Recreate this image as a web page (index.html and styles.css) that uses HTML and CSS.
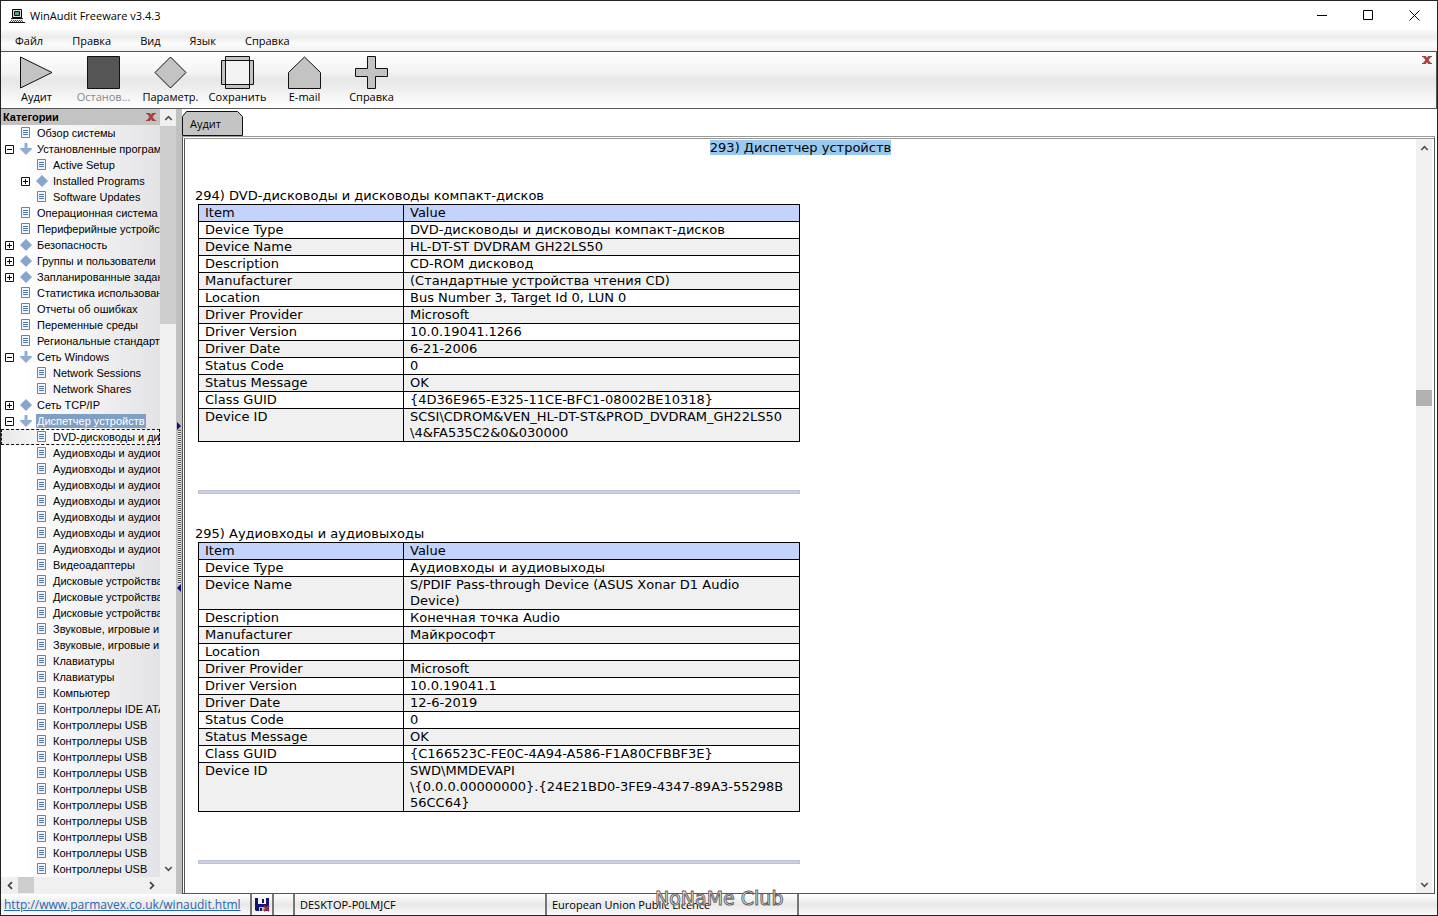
FILE: index.html
```html
<!DOCTYPE html>
<html lang="ru">
<head>
<meta charset="utf-8">
<title>WinAudit Freeware v3.4.3</title>
<link rel="stylesheet" href="styles.css">
</head>
<body>
<svg class="defs" aria-hidden="true">
  <symbol id="page" viewBox="0 0 10 12"><path d="M.5.5h8v10h-8z" fill="#f4f8fc" stroke="#5b87ae"/><path d="M2 3.5h5M2 5.5h5M2 7.5h5" stroke="#47759f"/></symbol>
  <symbol id="closed" viewBox="0 0 12 12"><path d="M6 0l6 6-6 6-6-6z" fill="#86a6ca"/></symbol>
  <symbol id="open" viewBox="0 0 12 12"><path d="M4.500 0h3v5H12v1L6 12 0 6V5h4.500z" fill="#93acd2"/></symbol>
  <symbol id="plus" viewBox="0 0 9 9"><path d="M.5.5h8v8h-8z" fill="#fff" stroke="#111"/><path d="M2 4.5h5M4.500 2v5" stroke="#000"/></symbol>
  <symbol id="minus" viewBox="0 0 9 9"><path d="M.5.5h8v8h-8z" fill="#fff" stroke="#111"/><path d="M2 4.5h5" stroke="#000"/></symbol>
  <symbol id="up" viewBox="0 0 8 6"><path d="M.7 5L4 1.600 7.300 5" fill="none" stroke="#505050" stroke-width="1.700"/></symbol>
  <symbol id="down" viewBox="0 0 8 6"><path d="M.7 1L4 4.400 7.300 1" fill="none" stroke="#505050" stroke-width="1.700"/></symbol>
  <symbol id="left" viewBox="0 0 6 8"><path d="M5 .7L1.600 4 5 7.300" fill="none" stroke="#404040" stroke-width="1.700"/></symbol>
  <symbol id="right" viewBox="0 0 6 8"><path d="M1 .7L4.400 4 1 7.300" fill="none" stroke="#404040" stroke-width="1.700"/></symbol>
  <symbol id="cross" viewBox="0 0 10 8"><path d="M0 0h4l1 2 1-2h4v1H9L6.500 4 9 7h1v1H6L5 6 4 8H0V7h1l2.500-3L1 1H0z" fill="#a8403f"/></symbol>
</svg>
<div class="window">
  <header class="titlebar">
    <svg class="logo" viewBox="0 0 16 14"><path d="M3.500.5h9v8h-9z" fill="#ddd" stroke="#000"/><path d="M5.500 2.500h5v4h-5z" fill="#5c9c84" stroke="#111"/><path d="M2 9.500h12M0 13.500h16" stroke="#111"/><path d="M2 10.500h12v2H2z" fill="#ddd"/><path d="M2 11.500h12M1 12.500h14" stroke="#555" stroke-dasharray="1 1"/></svg>
    <span class="title">WinAudit Freeware v3.4.3</span>
    <button aria-label="Minimize"><svg width="11" height="11"><path d="M0 5.500h10" stroke="#000"/></svg></button>
    <button aria-label="Maximize"><svg width="11" height="11"><path d="M.5.500h9v9h-9z" fill="none" stroke="#000"/></svg></button>
    <button aria-label="Close"><svg width="11" height="11"><path d="M.5.500l10 10M10.500.500l-10 10" stroke="#000"/></svg></button>
  </header>
  <nav class="menu"><button>Файл</button><button>Правка</button><button>Вид</button><button>Язык</button><button>Справка</button></nav>
  <div class="toolbar">
    <button><svg viewBox="0 0 33 33"><path d="M.5 1v31L32 16.500z" fill="#c3c3c3" stroke="#111"/></svg>Аудит</button>
    <button disabled><svg viewBox="0 0 33 33"><path d="M.5.500h32v32h-32z" fill="#555" stroke="#111"/></svg>Останов...</button>
    <button><svg viewBox="0 0 33 33"><path d="M16.500 1L32 16.500 16.500 32 1 16.500z" fill="#c3c3c3" stroke="#111"/></svg>Параметр.</button>
    <button><svg viewBox="0 0 33 33"><path d="M.5 4.500h32v24h-32zM4.500.500h24v32h-24z" fill="#c3c3c3"/><path d="M5 5h23v23H5z" fill="#f3f3f3"/><path d="M.5 4.500h32v24h-32zM4.500.500h24v32h-24z" fill="none" stroke="#111"/></svg>Сохранить</button>
    <button><svg viewBox="0 0 33 33"><path d="M16.500 1L32.500 16.500v16H.5v-16z" fill="#c3c3c3" stroke="#111"/></svg>E-mail</button>
    <button><svg viewBox="0 0 33 33"><path d="M12.500.500h8v12h12v8h-12v12h-8v-12H.5v-8h12z" fill="#c3c3c3" stroke="#111"/></svg>Справка</button>
    <button class="close" aria-label="Close toolbar"><svg><use href="#cross"/></svg></button>
  </div>
  <div class="main">
    <aside class="side">
      <div class="side-top">
        <div class="categories">
          <div class="cat-head"><b>Категории</b><button aria-label="Close categories"><svg><use href="#cross"/></svg></button></div>
          <ul class="tree">
            <li><i></i><svg><use href="#page"/></svg><span>Обзор системы</span></li>
            <li><button aria-label="Collapse"><svg><use href="#minus"/></svg></button><svg><use href="#open"/></svg><span>Установленные программы</span></li>
            <li class="sub"><i></i><svg><use href="#page"/></svg><span>Active Setup</span></li>
            <li class="sub"><button aria-label="Expand"><svg><use href="#plus"/></svg></button><svg><use href="#closed"/></svg><span>Installed Programs</span></li>
            <li class="sub"><i></i><svg><use href="#page"/></svg><span>Software Updates</span></li>
            <li><i></i><svg><use href="#page"/></svg><span>Операционная система</span></li>
            <li><i></i><svg><use href="#page"/></svg><span>Периферийные устройства</span></li>
            <li><button aria-label="Expand"><svg><use href="#plus"/></svg></button><svg><use href="#closed"/></svg><span>Безопасность</span></li>
            <li><button aria-label="Expand"><svg><use href="#plus"/></svg></button><svg><use href="#closed"/></svg><span>Группы и пользователи</span></li>
            <li><button aria-label="Expand"><svg><use href="#plus"/></svg></button><svg><use href="#closed"/></svg><span>Запланированные задания</span></li>
            <li><i></i><svg><use href="#page"/></svg><span>Статистика использования</span></li>
            <li><i></i><svg><use href="#page"/></svg><span>Отчеты об ошибках</span></li>
            <li><i></i><svg><use href="#page"/></svg><span>Переменные среды</span></li>
            <li><i></i><svg><use href="#page"/></svg><span>Региональные стандарты</span></li>
            <li><button aria-label="Collapse"><svg><use href="#minus"/></svg></button><svg><use href="#open"/></svg><span>Сеть Windows</span></li>
            <li class="sub"><i></i><svg><use href="#page"/></svg><span>Network Sessions</span></li>
            <li class="sub"><i></i><svg><use href="#page"/></svg><span>Network Shares</span></li>
            <li><button aria-label="Expand"><svg><use href="#plus"/></svg></button><svg><use href="#closed"/></svg><span>Сеть TCP/IP</span></li>
            <li><button aria-label="Collapse"><svg><use href="#minus"/></svg></button><svg><use href="#open"/></svg><span class="selected">Диспетчер устройств</span></li>
            <li class="sub focus"><i></i><svg><use href="#page"/></svg><span>DVD-дисководы и дисководы</span></li>
            <li class="sub"><i></i><svg><use href="#page"/></svg><span>Аудиовходы и аудиовыходы</span></li>
            <li class="sub"><i></i><svg><use href="#page"/></svg><span>Аудиовходы и аудиовыходы</span></li>
            <li class="sub"><i></i><svg><use href="#page"/></svg><span>Аудиовходы и аудиовыходы</span></li>
            <li class="sub"><i></i><svg><use href="#page"/></svg><span>Аудиовходы и аудиовыходы</span></li>
            <li class="sub"><i></i><svg><use href="#page"/></svg><span>Аудиовходы и аудиовыходы</span></li>
            <li class="sub"><i></i><svg><use href="#page"/></svg><span>Аудиовходы и аудиовыходы</span></li>
            <li class="sub"><i></i><svg><use href="#page"/></svg><span>Аудиовходы и аудиовыходы</span></li>
            <li class="sub"><i></i><svg><use href="#page"/></svg><span>Видеоадаптеры</span></li>
            <li class="sub"><i></i><svg><use href="#page"/></svg><span>Дисковые устройства</span></li>
            <li class="sub"><i></i><svg><use href="#page"/></svg><span>Дисковые устройства</span></li>
            <li class="sub"><i></i><svg><use href="#page"/></svg><span>Дисковые устройства</span></li>
            <li class="sub"><i></i><svg><use href="#page"/></svg><span>Звуковые, игровые и видео</span></li>
            <li class="sub"><i></i><svg><use href="#page"/></svg><span>Звуковые, игровые и видео</span></li>
            <li class="sub"><i></i><svg><use href="#page"/></svg><span>Клавиатуры</span></li>
            <li class="sub"><i></i><svg><use href="#page"/></svg><span>Клавиатуры</span></li>
            <li class="sub"><i></i><svg><use href="#page"/></svg><span>Компьютер</span></li>
            <li class="sub"><i></i><svg><use href="#page"/></svg><span>Контроллеры IDE ATA</span></li>
            <li class="sub"><i></i><svg><use href="#page"/></svg><span>Контроллеры USB</span></li>
            <li class="sub"><i></i><svg><use href="#page"/></svg><span>Контроллеры USB</span></li>
            <li class="sub"><i></i><svg><use href="#page"/></svg><span>Контроллеры USB</span></li>
            <li class="sub"><i></i><svg><use href="#page"/></svg><span>Контроллеры USB</span></li>
            <li class="sub"><i></i><svg><use href="#page"/></svg><span>Контроллеры USB</span></li>
            <li class="sub"><i></i><svg><use href="#page"/></svg><span>Контроллеры USB</span></li>
            <li class="sub"><i></i><svg><use href="#page"/></svg><span>Контроллеры USB</span></li>
            <li class="sub"><i></i><svg><use href="#page"/></svg><span>Контроллеры USB</span></li>
            <li class="sub"><i></i><svg><use href="#page"/></svg><span>Контроллеры USB</span></li>
            <li class="sub"><i></i><svg><use href="#page"/></svg><span>Контроллеры USB</span></li>
          </ul>
        </div>
        <div class="vscroll"><button aria-label="Scroll up"><svg><use href="#up"/></svg></button><div class="track"><div class="thumb tall"></div></div><button aria-label="Scroll down"><svg><use href="#down"/></svg></button></div>
      </div>
      <div class="hscroll"><button aria-label="Scroll left"><svg><use href="#left"/></svg></button><div class="thumb"></div><button aria-label="Scroll right"><svg><use href="#right"/></svg></button></div>
    </aside>
    <div class="splitter"><svg viewBox="0 0 4 8"><path d="M0 0l4 4-4 4z" fill="#10107c"/></svg><div class="dots"></div><svg viewBox="0 0 4 8"><path d="M4 0L0 4l4 4z" fill="#10107c"/></svg></div>
    <section class="content">
      <div class="tabs"><button><svg viewBox="0 0 61 25" aria-hidden="true"><path d="M.5 24.500V5.500l4-5h51l5 5v19z" fill="#c4c4c4" stroke="#111"/></svg><span>Аудит</span></button></div>
      <div class="frame">
        <article class="report">
          <h1><mark>293) Диспетчер устройств</mark></h1>
          <h2>294) DVD-дисководы и дисководы компакт-дисков</h2>
          <table>
            <tr><th>Item</th><th>Value</th></tr>
            <tr><td>Device Type</td><td>DVD-дисководы и дисководы компакт-дисков</td></tr>
            <tr><td>Device Name</td><td>HL-DT-ST DVDRAM GH22LS50</td></tr>
            <tr><td>Description</td><td>CD-ROM дисковод</td></tr>
            <tr><td>Manufacturer</td><td>(Стандартные устройства чтения CD)</td></tr>
            <tr><td>Location</td><td>Bus Number 3, Target Id 0, LUN 0</td></tr>
            <tr><td>Driver Provider</td><td>Microsoft</td></tr>
            <tr><td>Driver Version</td><td>10.0.19041.1266</td></tr>
            <tr><td>Driver Date</td><td>6-21-2006</td></tr>
            <tr><td>Status Code</td><td>0</td></tr>
            <tr><td>Status Message</td><td>OK</td></tr>
            <tr><td>Class GUID</td><td>{4D36E965-E325-11CE-BFC1-08002BE10318}</td></tr>
            <tr><td>Device ID</td><td>SCSI\CDROM&amp;VEN_HL-DT-ST&amp;PROD_DVDRAM_GH22LS50<br>\4&amp;FA535C2&amp;0&amp;030000</td></tr>
          </table>
          <hr>
          <h2>295) Аудиовходы и аудиовыходы</h2>
          <table>
            <tr><th>Item</th><th>Value</th></tr>
            <tr><td>Device Type</td><td>Аудиовходы и аудиовыходы</td></tr>
            <tr><td>Device Name</td><td>S/PDIF Pass-through Device (ASUS Xonar D1 Audio<br>Device)</td></tr>
            <tr><td>Description</td><td>Конечная точка Audio</td></tr>
            <tr><td>Manufacturer</td><td>Майкрософт</td></tr>
            <tr><td>Location</td><td></td></tr>
            <tr><td>Driver Provider</td><td>Microsoft</td></tr>
            <tr><td>Driver Version</td><td>10.0.19041.1</td></tr>
            <tr><td>Driver Date</td><td>12-6-2019</td></tr>
            <tr><td>Status Code</td><td>0</td></tr>
            <tr><td>Status Message</td><td>OK</td></tr>
            <tr><td>Class GUID</td><td>{C166523C-FE0C-4A94-A586-F1A80CFBBF3E}</td></tr>
            <tr><td>Device ID</td><td>SWD\MMDEVAPI<br>\{0.0.0.00000000}.{24E21BD0-3FE9-4347-89A3-55298B<br>56CC64}</td></tr>
          </table>
          <hr>
        </article>
        <div class="vscroll"><button aria-label="Scroll up"><svg><use href="#up"/></svg></button><div class="track low"><div class="thumb"></div></div><button aria-label="Scroll down"><svg><use href="#down"/></svg></button></div>
      </div>
    </section>
  </div>
  <footer class="status">
    <div class="c-link"><a href="http://www.parmavex.co.uk/winaudit.html">http://www.parmavex.co.uk/winaudit.html</a></div>
    <div class="c-icon"><svg viewBox="0 0 15 14"><path d="M0 0h14v13H1l-1-1z" fill="#14146f"/><path d="M3 0h8v6H3z" fill="#f4f4f4"/><path d="M7 1h2v4H7z" fill="#14146f"/><path d="M4 9h6v4H4z" fill="#bbb"/><path d="M5 10h2v3H5z" fill="#14146f"/><path d="M9 8l5 5M14 8l-5 5" stroke="#b32638" stroke-width="2"/></svg></div>
    <div class="c-gap"></div>
    <div class="c-text">DESKTOP-P0LMJCF</div>
    <div class="c-text">European Union Public Licence</div>
  </footer>
  <div class="watermark">NoNaMe Club</div>
</div>
</body>
</html>
```
FILE: styles.css
```css
* { box-sizing: border-box; }
body { margin: 0; font: 11px/16px "Open Sans", "Noto Sans", sans-serif; color: #000; }
button { margin: 0; padding: 0; border: 0; background: none; font: inherit; color: inherit; }
svg { display: block; flex: none; }
.defs { position: absolute; width: 0; height: 0; }
.window { position: relative; display: flex; flex-direction: column; height: 100vh; overflow: hidden; border: 1px solid #222; background: #fff; }

.titlebar { display: flex; align-items: center; height: 29px; padding-left: 8px; }
.titlebar .logo { width: 16px; height: 14px; }
.titlebar .title { flex: 1; padding-left: 5px; }
.titlebar button { display: flex; align-items: center; justify-content: center; width: 46px; height: 29px; }

.menu { display: flex; gap: 29px; height: 21px; padding-left: 14px; background: linear-gradient(#f8f8f8, #ececec 35%, #fcfcfc 65%, #f2f2f2); }
.menu button { line-height: 21px; }

.toolbar { display: flex; height: 58px; padding-left: 2px; border: 1px solid #555; border-width: 1px 1px 1px 0; background: linear-gradient(#fff, #f4f4f4 35%, #e6e6e6 50%, #f0f0f0 70%, #fff); }
.toolbar button { display: flex; flex-direction: column; align-items: center; width: 67px; padding-top: 4px; white-space: nowrap; }
.toolbar button svg { width: 33px; height: 33px; }
.toolbar button:disabled { color: #888; }
.toolbar .close { width: 18px; margin-left: auto; }
.toolbar .close svg { width: 10px; height: 8px; }

.main { display: flex; flex: 1; min-height: 0; }
.side { display: flex; flex-direction: column; flex: none; width: 175px; background: #f0f0f0; }
.side-top { display: flex; flex: 1; min-height: 0; }
.categories { display: flex; flex-direction: column; flex: none; width: 159px; overflow: hidden; background: linear-gradient(90deg, #fff 15%, #e3e3e6); font: 11px/16px "Liberation Sans", Arial, sans-serif; }
.cat-head { display: flex; align-items: center; justify-content: space-between; flex: none; height: 16px; padding: 0 4px 0 2px; background: #c3c3c3; }
.cat-head svg { width: 10px; height: 8px; }
.tree { flex: 1; min-height: 0; overflow: hidden; margin: 0; padding: 0; list-style: none; }
.tree li { display: flex; align-items: center; height: 16px; padding-left: 4px; white-space: nowrap; }
.tree .sub { padding-left: 20px; }
.tree i, .tree button { flex: none; width: 9px; margin-right: 6px; }
.tree svg { width: 12px; height: 12px; }
.tree button svg { width: 9px; height: 9px; }
.tree span { margin-left: 4px; padding: 0 1px; line-height: 14px; }
.tree .selected { background: #7f9fc4; color: #fff; }
.tree .focus { outline: 1px dashed #111; outline-offset: -1px; background: linear-gradient(90deg, #e8e8e8, #fff 40%, #ececec); }

.vscroll { display: flex; flex-direction: column; flex: none; width: 16px; background: #f0f0f0; }
.vscroll button { display: flex; align-items: center; justify-content: center; height: 17px; }
.vscroll svg { width: 9px; height: 6px; }
.track { flex: 1; }
.thumb { width: 16px; height: 16px; background: #cdcdcd; }
.vscroll .thumb { width: 100%; }
.vscroll .tall { height: 27%; }
.track.low { padding-top: 234px; }
.low .thumb { background: #b2b2b2; }
.hscroll { display: flex; flex: none; width: 159px; height: 17px; }
.hscroll button { display: flex; align-items: center; justify-content: center; width: 17px; }
.hscroll button:last-child { margin-left: auto; }
.hscroll svg { width: 6px; height: 9px; }
.splitter { display: flex; flex-direction: column; align-items: center; flex: none; width: 6px; padding-top: 313px; background: #c1c1c1; }
.splitter svg { width: 4px; height: 8px; }
.dots { width: 3px; height: 154px; background: repeating-linear-gradient(#555 0 1px, #eee 1px 2px); }

.content { display: flex; flex-direction: column; flex: 1; min-width: 0; padding-right: 2px; }
.tabs { flex: none; height: 27px; padding-top: 2px; }
.tabs button { display: grid; align-items: center; width: 61px; height: 25px; text-align: left; }
.tabs svg, .tabs span { grid-area: 1 / 1; }
.tabs svg { width: 61px; height: 25px; }
.tabs span { padding-left: 8px; }
.frame { display: flex; flex: 1; min-height: 0; padding-right: 2px; border: 1px solid #555; border-top: 3px solid #999; border-top-style: double; border-left: 3px double #555; }
.report { flex: 1; min-width: 0; overflow: hidden; padding: 1px 0 0 13px; font: 13px/16px "DejaVu Sans", Verdana, sans-serif; }
.report h1, .report h2 { margin: 0; font: inherit; }
.report h1 { margin: 0 0 32px -13px; text-align: center; }
.report h2 { margin-left: -3px; }
.report mark { background: #99c9ef; color: inherit; }
.report table { width: 602px; table-layout: fixed; border-collapse: collapse; }
.report th, .report td { height: 17px; padding: 0 6px; border: 1px solid #000; font-weight: normal; text-align: left; vertical-align: top; white-space: nowrap; }
.report th:first-child { width: 205px; }
.report th { background: #c3d3fc; }
.report tr:nth-child(odd) td { background: #f0f0f0; }
.report hr { width: 602px; height: 4px; margin: 48px 0 32px; border: 1px solid #bcc0d8; background: #cdd0e2; }

.status { display: flex; flex: none; height: 21px; background: linear-gradient(#fff, #e8e8e8 50%, #fafafa); line-height: 22px; white-space: nowrap; }
.status div { border-right: 2px solid #777; }
.c-link { width: 251px; padding-left: 3px; font-size: 12px; }
.c-link a { color: #2c66b0; }
.c-icon { display: flex; align-items: center; width: 22px; padding-left: 3px; }
.c-icon svg { width: 15px; height: 14px; }
.c-gap { width: 21px; }
.c-text { width: 252px; padding-left: 5px; }
.watermark { position: absolute; left: 654px; bottom: 5px; color: #fff; font: 19px/24px "DejaVu Sans", sans-serif; -webkit-text-stroke: 1px #666; }
```
